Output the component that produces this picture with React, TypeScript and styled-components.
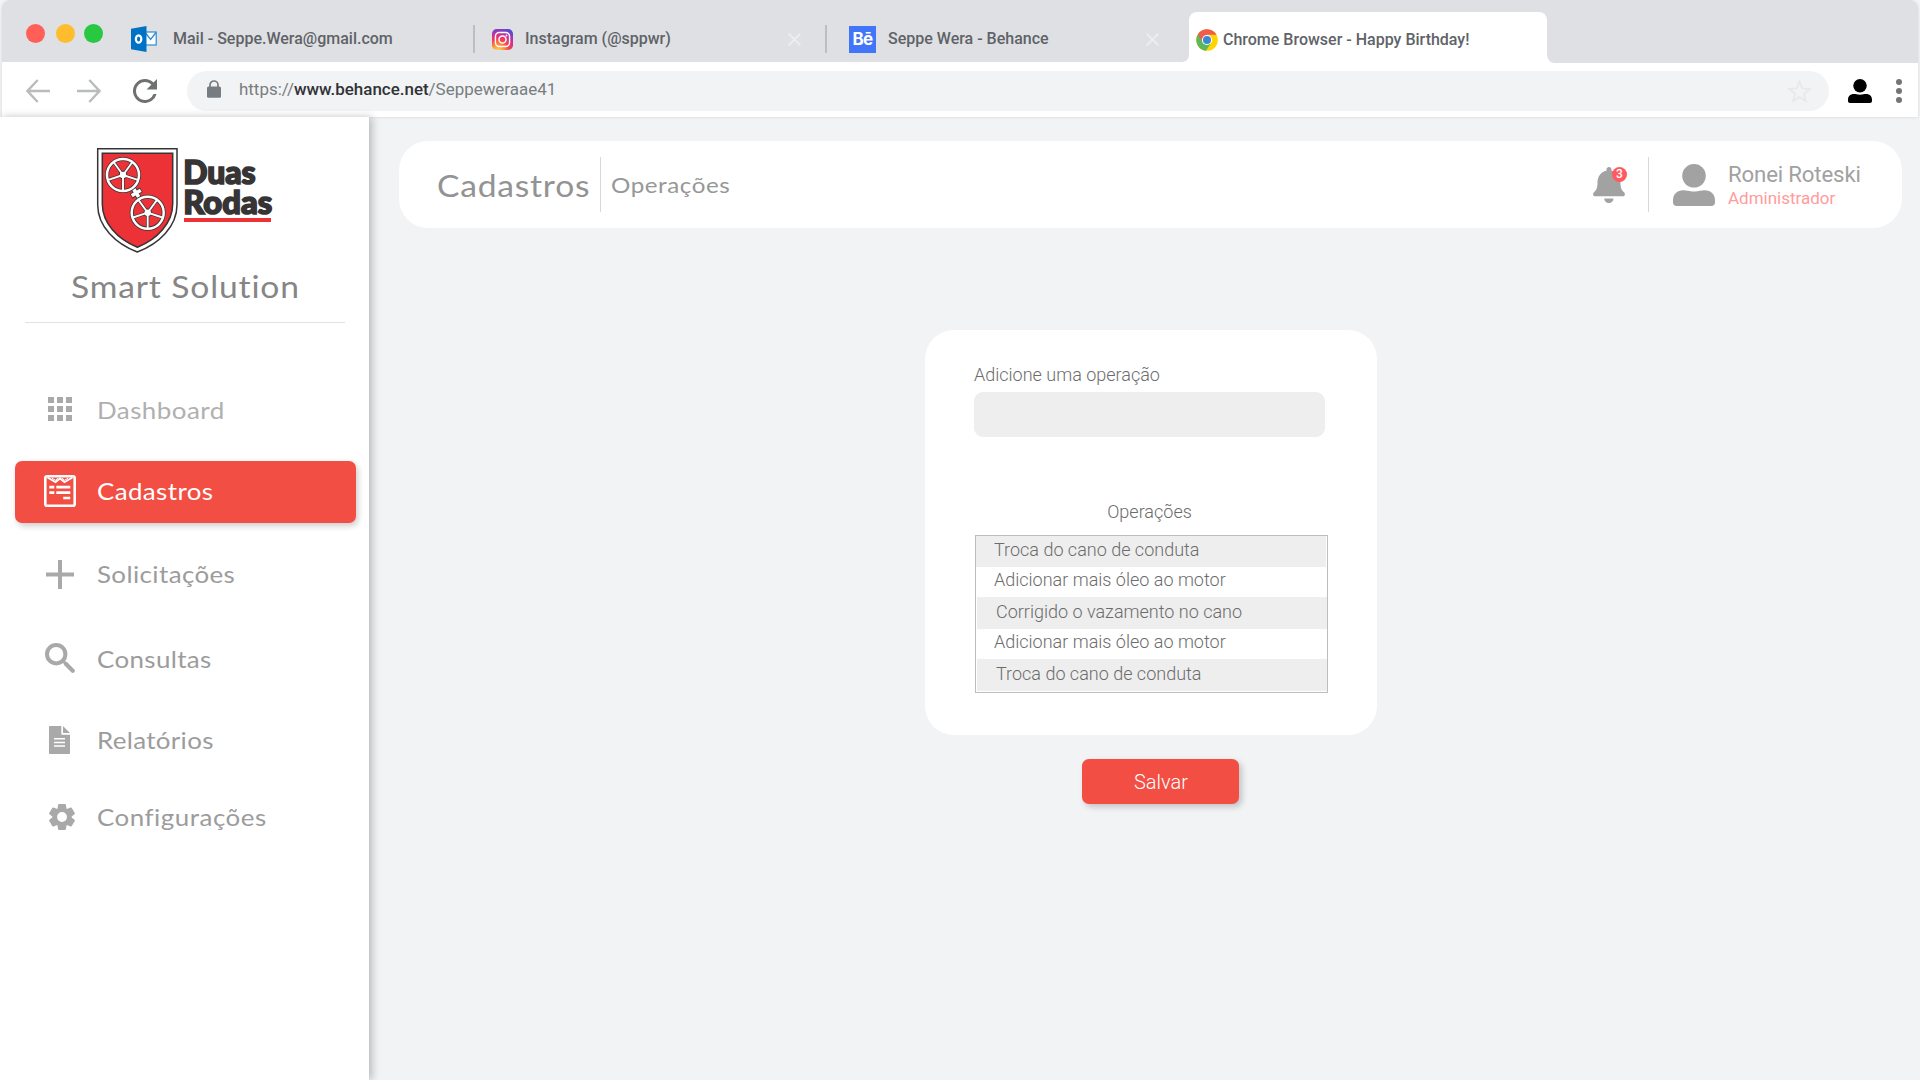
import React from 'react';
import styled, { createGlobalStyle } from 'styled-components';

const GlobalStyle = createGlobalStyle`
  *, *::before, *::after { box-sizing: border-box; }
  body { margin: 0; background: #f1f3f5; font-family: Roboto, "Liberation Sans", sans-serif; overflow: hidden; }
  svg { display: block; flex: none; }
`;

/* ---------- Browser chrome ---------- */

const Screen = styled.div`
  width: 1920px;
  height: 1080px;
  display: flex;
  flex-direction: column;
  background: #f1f3f5;
`;

const Chrome = styled.header`
  margin: 0 2px;
  height: 117px;
  flex: none;
  background: #fff;
  border-radius: 9px 9px 0 0;
  box-shadow: 0 0 3px rgba(0, 0, 0, 0.14);
`;

const TabStrip = styled.div`
  display: flex;
  height: 63px;
  border-radius: 9px 9px 0 0;
  background: linear-gradient(#dee0e4 30px, #fff 30px);
`;

const InactiveTabs = styled.div`
  display: flex;
  align-items: center;
  width: 1187px;
  height: 62px;
  padding: 16px 0 0 24px;
  background: #dee0e4;
  border-radius: 9px 0 7px 0;
`;

const StripRest = styled.div`
  flex: 1;
  background: #dee0e4;
  border-radius: 0 9px 0 8px;
`;

const Lights = styled.div`
  display: flex;
  width: 105px;
  gap: 10px;
  margin-top: -11px;
`;

const Light = styled.span<{ $color: string }>`
  width: 19px;
  height: 19px;
  border-radius: 50%;
  background: ${(p) => p.$color};
  &:nth-child(2) { margin: 0 -1px 0 1px; }
`;

const Tab = styled.div<{ $width: number }>`
  display: flex;
  align-items: center;
  width: ${(p) => p.$width}px;
  height: 28px;
`;

const BorderedTab = styled(Tab)`
  border-left: 2px solid #bcbec1;
  padding-left: ${(p) => (p.$width > 353 ? 22 : 17)}px;
`;

const MailIcon = styled.span`
  margin-top: -1px;
`;

const ActiveTab = styled.div`
  display: flex;
  align-items: center;
  width: 358px;
  margin-top: 12px;
  padding: 4px 0 0 7px;
  height: 51px;
  background: #fff;
  border-radius: 8px 8px 0 0;
`;

const TabTitle = styled.span<{ $gap: number }>`
  margin: 0 0 0 ${(p) => p.$gap}px;
  font-size: 16px;
  font-weight: 500;
  line-height: 20px;
  color: #5f6367;
  white-space: nowrap;
`;

const CloseSlot = styled.span<{ $right: number }>`
  margin-left: auto;
  margin-right: ${(p) => p.$right}px;
`;

const Toolbar = styled.div`
  display: flex;
  align-items: center;
  height: 54px;
  padding: 2px 0 0 24px;
`;

const NavButtons = styled.div`
  display: flex;
  align-items: center;
  width: 161px;
`;

const AddressBar = styled.div`
  display: flex;
  align-items: center;
  width: 1642px;
  height: 40px;
  margin-top: -1px;
  padding: 0 17px 0 20px;
  border-radius: 20px;
  background: #f1f3f4;
`;

const Url = styled.span`
  flex: 1;
  margin: -3px 0 0 18px;
  font-size: 16.95px;
  line-height: 20px;
  color: #787d80;
  b { font-weight: 500; color: #303236; }
`;

/* ---------- Sidebar ---------- */

const Body = styled.div`
  flex: 1;
  display: flex;
`;

const Sidebar = styled.aside`
  position: relative;
  width: 369px;
  flex: none;
  padding-top: 30px;
  background: #fff;
  box-shadow: 3px 0 8px rgba(0, 0, 0, 0.24);
`;

const LogoBox = styled.div`
  height: 119px;
  padding-left: 96px;
`;

const Wide = styled.span<{ $size: number; $stretch: number; $spacing: number; $color: string }>`
  display: block;
  font-family: Lato, "Open Sans", sans-serif;
  font-size: ${(p) => p.$size}px;
  letter-spacing: ${(p) => p.$spacing}px;
  color: ${(p) => p.$color};
  transform: scaleX(${(p) => p.$stretch});
  transform-origin: left center;
  white-space: nowrap;
`;

const Brand = styled.div`
  padding-left: 70.5px;
  height: 40px;
  line-height: 40px;
`;

const Rule = styled.hr`
  height: 1px;
  margin: 16px 24px 55px 25px;
  border: 0;
  background: #e2e2e2;
`;

const NavItem = styled.a<{ $active?: boolean; $gap: number }>`
  display: flex;
  align-items: center;
  height: 62px;
  margin: ${(p) => p.$gap}px 13px 0 15px;
  border-radius: 7px;
  background: ${(p) => (p.$active ? '#f24e43' : 'transparent')};
  box-shadow: ${(p) => (p.$active ? '2px 3px 6px rgba(0, 0, 0, 0.2)' : 'none')};
`;

const NavIcon = styled.span<{ $x: number; $lift: number }>`
  width: 82px;
  padding-left: ${(p) => p.$x - 15}px;
  margin-bottom: ${(p) => p.$lift * 2}px;
`;

const NavLabel = styled.span<{ $lift: number }>`
  line-height: 30px;
  margin-bottom: ${(p) => p.$lift * 2}px;
`;

/* ---------- Main ---------- */

const Main = styled.main`
  flex: 1;
  display: flex;
  flex-direction: column;
  align-items: center;
  padding: 24px 18px 0 30px;
`;

const PageHeader = styled.div`
  display: flex;
  align-items: center;
  width: 100%;
  height: 87px;
  padding-left: 38px;
  border-radius: 29px;
  background: #fff;
`;

const Crumb = styled.div<{ $width: number; $lift: number }>`
  width: ${(p) => p.$width}px;
  margin-bottom: ${(p) => p.$lift * 2}px;
  line-height: 36px;
`;

const VRule = styled.span`
  width: 1px;
  height: 55px;
  background: #d8d8d8;
`;

const BellBox = styled.div`
  position: relative;
  margin: 0 23px 0 auto;
`;

const Badge = styled.span`
  position: absolute;
  top: 0;
  right: -2px;
  width: 15px;
  height: 15px;
  border-radius: 50%;
  background: #ff5a5f;
  color: #fff;
  font-size: 12px;
  font-weight: 500;
  line-height: 15px;
  text-align: center;
`;

const UserIcon = styled.div`
  margin: 0 13px 0 24px;
`;

const UserText = styled.div`
  display: flex;
  flex-direction: column;
  width: 174px;
`;

const UserName = styled.span`
  font-size: 22.2px;
  line-height: 24px;
  color: #a1a1a1;
  letter-spacing: -0.15px;
`;

const UserRole = styled.span`
  font-size: 17px;
  line-height: 20px;
  margin-top: 2px;
  color: #ff9c9c;
`;

const Card = styled.section`
  width: 452px;
  height: 405px;
  margin: 102px 0 0 1px;
  padding: 34px 0 0 49px;
  border-radius: 29px;
  background: #fff;
  font-size: 18px;
  font-weight: 300;
  color: #6c6c6c;
`;

const FieldLabel = styled.label`
  display: block;
  line-height: 22px;
`;

const Field = styled.input`
  display: block;
  width: 351px;
  height: 45px;
  margin-top: 6px;
  padding: 0 14px;
  border: 0;
  border-radius: 9px;
  background: #eee;
`;

const ListTitle = styled.h2`
  width: 351px;
  margin: 64px 0 12px;
  font-size: 18px;
  font-weight: 300;
  line-height: 22px;
  text-align: center;
`;

const List = styled.ul`
  width: 353px;
  height: 158px;
  margin: 0 0 0 1px;
  padding: 0;
  border: 1px solid #bdbdbd;
  list-style: none;
`;

const ListRow = styled.li<{ $height: number; $line: number; $shade: boolean; $inset: boolean }>`
  height: ${(p) => p.$height}px;
  line-height: ${(p) => p.$line}px;
  margin: ${(p) => (p.$inset ? '0 0 0 1px' : '0 1px 0 0')};
  padding-left: ${(p) => (p.$inset ? 19 : 18)}px;
  background: ${(p) => (p.$shade ? '#eee' : 'transparent')};
`;

const SaveButton = styled.button`
  width: 157px;
  height: 45px;
  margin: 24px 0 0 20px;
  padding: 0 0 0 1px;
  border: 0;
  border-radius: 7px;
  background: #f24e43;
  box-shadow: 3px 3px 6px rgba(0, 0, 0, 0.2);
  color: #fff;
  font: 300 20px/46px Roboto, sans-serif;
`;

/* ---------- Drawings ---------- */

const OutlookIcon = () => (
  <svg width="26" height="26" viewBox="0 0 26 26">
    <rect x="13" y="6" width="12.2" height="13" fill="#fff" stroke="#2a8ad4" strokeWidth="1.2" />
    <path d="M15 7.5l4.600 6 5.400-7" fill="none" stroke="#2a8ad4" strokeWidth="1.3" />
    <path d="M0 2.7L15.5 0v26L0 23.3z" fill="#0072c6" />
    <ellipse cx="7.600" cy="13" rx="2.700" ry="3.700" fill="none" stroke="#fff" strokeWidth="2.2" />
  </svg>
);

const InstagramIcon = () => (
  <svg width="21" height="21" viewBox="0 0 22 22">
    <defs>
      <radialGradient id="ig" cx="0.28" cy="1.05" r="1.1">
        <stop offset="0" stopColor="#ffdc5e" />
        <stop offset="0.25" stopColor="#fd9a3c" />
        <stop offset="0.5" stopColor="#f7414c" />
        <stop offset="0.75" stopColor="#c52fa0" />
        <stop offset="1" stopColor="#5a4bd0" />
      </radialGradient>
    </defs>
    <rect width="22" height="22" rx="5" fill="url(#ig)" />
    <rect x="3.6" y="3.6" width="14.8" height="14.8" rx="4.2" fill="none" stroke="#fff" strokeWidth="1.5" />
    <circle cx="11" cy="11" r="3.7" fill="none" stroke="#fff" strokeWidth="1.5" />
    <circle cx="15.2" cy="6.8" r="0.95" fill="#fff" />
  </svg>
);

const BehanceTile = styled.span`
  display: flex;
  align-items: center;
  justify-content: center;
  width: 27px;
  height: 27px;
  background: #4176fb;
  color: #fff;
  font: 700 17px/27px Inter, sans-serif;
  letter-spacing: -0.6px;
`;

const ChromeIcon = () => (
  <svg width="22" height="22" viewBox="0 0 22 22">
    <circle cx="11" cy="11" r="10.8" fill="#ffd400" />
    <path d="M11 11L1.8 5.6A10.8 10.8 0 0 0 10 21.8L15.2 13.5z" fill="#5bb85c" />
    <path d="M11 5.8h9.5A10.8 10.8 0 0 0 1.9 5.3l4.7 8z" fill="#ef5b4c" />
    <circle cx="11" cy="11" r="5.1" fill="#fff" />
    <circle cx="11" cy="11" r="4" fill="#3b87d0" />
  </svg>
);

const CloseIcon = () => (
  <svg width="13" height="13" viewBox="0 0 13 13" stroke="#eceef1" strokeWidth="1.9">
    <path d="M0.7 0.7l11.6 11.6M12.3 0.7L0.7 12.3" />
  </svg>
);

const ArrowIcon = ({ flip }: { flip?: boolean }) => (
  <svg width="24" height="24" viewBox="0 0 24 24" fill="none" stroke="#b9bbbc" strokeWidth="2.4">
    <path d={flip ? 'M0 12h22M12.3 1l10.2 11-10.2 11' : 'M24 12H2M11.7 1L1.5 12l10.2 11'} />
  </svg>
);

const ReloadIcon = () => (
  <svg width="24" height="24" viewBox="4 4 16 16" fill="#6f7072">
    <path d="M17.65 6.35A7.96 7.96 0 0 0 12 4a8 8 0 1 0 7.73 10h-2.08A6 6 0 1 1 12 6c1.66 0 3.14.69 4.22 1.78L13 11h7V4z" />
  </svg>
);

const LockIcon = () => (
  <svg width="14" height="18" viewBox="0 0 14 18">
    <path d="M3 8V5a4 4 0 0 1 8 0v3" fill="none" stroke="#767c80" strokeWidth="1.7" />
    <rect y="6.600" width="14" height="11.2" rx="1.5" fill="#767c80" />
  </svg>
);

const LockSlot = styled.span`
  margin-top: -3px;
`;

const StarIcon = () => (
  <svg width="25" height="24" viewBox="2 2 20 19" fill="#e7e9eb">
    <path d="M22 9.24l-7.19-.62L12 2 9.19 8.63 2 9.24l5.46 4.73L5.82 21 12 17.27 18.18 21l-1.63-7.03zM12 15.4l-3.76 2.27 1-4.28-3.32-2.88 4.38-.38L12 6.1l1.71 4.04 4.38.38-3.32 2.88 1 4.28z" />
  </svg>
);

const PersonIcon = ({ size, color }: { size: number; color: string }) => (
  <svg width={size} height={size} viewBox="0 0 42 42" fill={color}>
    <circle cx="21" cy="11.8" r="11.8" />
    <path d="M0 38.5V36C0 30 4.5 26.2 10 26.2c4 0 6 1.2 11 1.2s7-1.2 11-1.2c5.5 0 10 3.8 10 9.8v2.5c0 2-1.5 3.5-3.5 3.5h-35C1.5 42 0 40.5 0 38.5z" />
  </svg>
);

const KebabIcon = () => (
  <svg width="6" height="24" viewBox="0 0 6 24" fill="#757575">
    <circle cx="3" cy="3" r="3" />
    <circle cx="3" cy="12" r="3" />
    <circle cx="3" cy="21" r="3" />
  </svg>
);

const BellIcon = () => (
  <svg width="32" height="36" viewBox="0 0 32 36" fill="#a2a2a2">
    <path d="M16 0c1.5 0 2.5 1.1 2.5 2.6v1.2C24.5 5 27.5 10 27.5 15c0 5 .5 7.5 3.5 10.3 1 1 1 2 .8 2.7-.2.9-.9 1.3-1.8 1.3H2c-.9 0-1.6-.4-1.8-1.3-.2-.7-.2-1.7.8-2.7 3-2.8 3.5-5.3 3.5-10.3 0-5 3-10 9-11.2V2.6C13.500 1.100 14.500 0 16 0z" />
    <path d="M11.2 31.5h9.3c0 2.7-2 4.5-4.6 4.5s-4.7-1.8-4.7-4.5z" />
  </svg>
);

const SPOKES = [90, 162, 234, 306, 18];

const Wheel = ({ cx, cy }: { cx: number; cy: number }) => (
  <g transform={`translate(${cx} ${cy})`}>
    <circle r="16" fill="none" stroke="#373435" strokeWidth="4" />
    {SPOKES.map((a) => (
      <line key={a} x2="15" transform={`rotate(${a})`} stroke="#373435" strokeWidth="3.2" />
    ))}
    <circle r="4.3" fill="#373435" />
    <circle r="16" fill="none" stroke="#fff" strokeWidth="2.5" />
    {SPOKES.map((a) => (
      <line key={a} x2="15.5" transform={`rotate(${a})`} stroke="#fff" strokeWidth="1.9" />
    ))}
    <circle r="3.2" fill="#fff" />
  </g>
);

const WORDMARK = { fontFamily: 'Lato, sans-serif', fontWeight: 900, fontSize: 33, fill: '#373435', stroke: '#373435', strokeWidth: 1.7 };

const Logo = () => (
  <svg width="180" height="108" viewBox="96 147 180 108">
    <path d="M97.7 148.7H177v56c0 22-18 39-39.7 47.3C115.7 243.700 97.7 226.7 97.7 204.7z" fill="#fff" stroke="#373435" strokeWidth="1.5" />
    <path d="M102.3 153.2h70.4v50.5c0 19.5-15.5 35.5-35.3 43.6-19.8-8.1-35.1-24.1-35.1-43.6z" fill="#ec3237" stroke="#373435" strokeWidth="1.5" />
    <g transform="translate(136.2 193) rotate(-32)">
      <path d="M-6 0H6M0-5.5V5.5" stroke="#373435" strokeWidth="5.2" />
      <path d="M-5.3 0H5.3M0-4.8V4.8" stroke="#fff" strokeWidth="3.6" />
    </g>
    <Wheel cx={123} cy={175} />
    <Wheel cx={147.7} cy={212.7} />
    <text x="183.2" y="183.5" textLength="72.5" lengthAdjust="spacingAndGlyphs" {...WORDMARK}>Duas</text>
    <text x="183.2" y="214" textLength="89" lengthAdjust="spacingAndGlyphs" {...WORDMARK}>Rodas</text>
    <rect x="184" y="218" width="87" height="4" fill="#ec3237" />
  </svg>
);

const GridIcon = () => (
  <svg width="24" height="24" fill="#a9a9a9">
    {[0, 9, 18].map((y) => [0, 9, 18].map((x) => <rect key={`${x}-${y}`} x={x} y={y} width="6" height="6" />))}
  </svg>
);

const FormIcon = () => (
  <svg width="32" height="32" viewBox="0 0 32 32" fill="none" stroke="#fff">
    <rect x="1.3" y="1.3" width="29.4" height="29.4" rx="1.8" strokeWidth="2.6" />
    <path d="M3.5 2.5l8 4.6 4.5-3.6 4.5 3.6 8-4.6" strokeWidth="1.9" />
    <path d="M8 3.2l3.5 2 2.5-2M18 3.2l2.500 2 3.500-2" strokeWidth="1" />
    <path d="M5.3 12.1h5M12.3 12.1h14M5.3 17.6h5M12.3 17.6h14M19.2 23h7" strokeWidth="2.6" />
  </svg>
);

const PlusIcon = () => (
  <svg width="28" height="29" fill="#a9a9a9">
    <rect x="12" width="4" height="29" />
    <rect y="12.5" width="28" height="4" />
  </svg>
);

const SearchIcon = () => (
  <svg width="30" height="30" viewBox="0 0 30 30" fill="none" stroke="#a9a9a9">
    <circle cx="11.2" cy="11.2" r="9.2" strokeWidth="4" />
    <path d="M18 18l3 3" strokeWidth="2.6" />
    <path d="M21 21l6.7 6.7" strokeWidth="4.2" strokeLinecap="round" />
  </svg>
);

const DocIcon = () => (
  <svg width="21" height="28" viewBox="0 0 21 28">
    <path d="M1 0h11.300v7.700c0 .6.3 1 1 1H21V27c0 .6-.4 1-1 1H1c-.6 0-1-.4-1-1V1c0-.6.4-1 1-1z" fill="#a9a9a9" />
    <path d="M14 0l7 7h-7z" fill="#a9a9a9" />
    <path d="M5 12.7h11M5 16.4h11M5 20.1h11" stroke="#fff" strokeWidth="1.5" />
  </svg>
);

const GearIcon = () => (
  <svg width="26" height="26" viewBox="-13 -13 26 26">
    <g fill="#a9a9a9">
      <circle r="9.6" />
      {[0, 60, 120].map((a) => (
        <path key={a} transform={`rotate(${a})`} d="M-3.9 -12.2q.1-.8.9-.8h6q.8 0 .9.8l.6 4v16.4l-.6 4q-.1.8-.9.8h-6q-.8 0-.9-.8l-.6-4v-16.4z" />
      ))}
    </g>
    <circle r="4.9" fill="#fff" />
  </svg>
);

/* ---------- Data ---------- */

const NAV = [
  { label: 'Dashboard', icon: <GridIcon />, x: 48, gap: 0, lift: -0.5, iconLift: 0, spacing: 0.43, color: '#b0b0b0' },
  { label: 'Cadastros', icon: <FormIcon />, x: 44, gap: 21, lift: 1.5, iconLift: 1, spacing: 0.35, color: '#fff', active: true },
  { label: 'Solicitações', icon: <PlusIcon />, x: 46, gap: 21, lift: 1.5, iconLift: 0.5, spacing: 0.36, color: '#9c9c9c' },
  { label: 'Consultas', icon: <SearchIcon />, x: 45, gap: 21, lift: -0.5, iconLift: 0, spacing: 0.34, color: '#9c9c9c' },
  { label: 'Relatórios', icon: <DocIcon />, x: 49, gap: 20, lift: 0.5, iconLift: 0, spacing: 0.31, color: '#9c9c9c' },
  { label: 'Configurações', icon: <GearIcon />, x: 49, gap: 15, lift: 0.5, iconLift: 0, spacing: 0.47, color: '#9c9c9c' },
];

const OPERATIONS = [
  { text: 'Troca do cano de conduta', height: 31, line: 28, shade: true, inset: false },
  { text: 'Adicionar mais óleo ao motor', height: 30, line: 26, shade: false, inset: false },
  { text: 'Corrigido o vazamento no cano', height: 32, line: 30, shade: true, inset: true },
  { text: 'Adicionar mais óleo ao motor', height: 30, line: 26, shade: false, inset: false },
  { text: 'Troca do cano de conduta', height: 32, line: 30, shade: true, inset: true },
];

const KebabSlot = styled.span`
  margin-left: 24px;
`;

const ProfileSlot = styled.span`
  margin-left: 19px;
`;

const Gap = styled.span<{ $w: number }>`
  width: ${(p) => p.$w}px;
`;

export default function App() {
  return (
    <Screen>
      <GlobalStyle />
      <Chrome>
        <TabStrip>
          <InactiveTabs>
            <Lights>
              <Light $color="#ff5f57" />
              <Light $color="#ffbd2e" />
              <Light $color="#28c840" />
            </Lights>
            <Tab $width={342}>
              <MailIcon><OutlookIcon /></MailIcon>
              <TabTitle $gap={16}>Mail - Seppe.Wera@gmail.com</TabTitle>
            </Tab>
            <BorderedTab $width={352}>
              <InstagramIcon />
              <TabTitle $gap={12}>Instagram (@sppwr)</TabTitle>
              <CloseSlot $right={24}><CloseIcon /></CloseSlot>
            </BorderedTab>
            <BorderedTab $width={362}>
              <BehanceTile>Bē</BehanceTile>
              <TabTitle $gap={12}>Seppe Wera - Behance</TabTitle>
              <CloseSlot $right={28}><CloseIcon /></CloseSlot>
            </BorderedTab>
          </InactiveTabs>
          <ActiveTab>
            <ChromeIcon />
            <TabTitle $gap={5}>Chrome Browser - Happy Birthday!</TabTitle>
          </ActiveTab>
          <StripRest />
        </TabStrip>
        <Toolbar>
          <NavButtons>
            <ArrowIcon />
            <Gap $w={27} />
            <ArrowIcon flip />
            <Gap $w={32} />
            <ReloadIcon />
          </NavButtons>
          <AddressBar>
            <LockSlot><LockIcon /></LockSlot>
            <Url>https://<b>www.behance.net</b>/Seppeweraae41</Url>
            <StarIcon />
          </AddressBar>
          <ProfileSlot><PersonIcon size={24} color="#000" /></ProfileSlot>
          <KebabSlot><KebabIcon /></KebabSlot>
        </Toolbar>
      </Chrome>
      <Body>
        <Sidebar>
          <LogoBox><Logo /></LogoBox>
          <Brand>
            <Wide $size={30} $stretch={1.12} $spacing={0.77} $color="#868686">Smart Solution</Wide>
          </Brand>
          <Rule />
          <nav>
            {NAV.map((n) => (
              <NavItem key={n.label} $active={n.active} $gap={n.gap}>
                <NavIcon $x={n.x} $lift={n.iconLift}>{n.icon}</NavIcon>
                <NavLabel $lift={n.lift}>
                  <Wide $size={24} $stretch={1.08} $spacing={n.spacing} $color={n.color}>{n.label}</Wide>
                </NavLabel>
              </NavItem>
            ))}
          </nav>
        </Sidebar>
        <Main>
          <PageHeader>
            <Crumb $width={163} $lift={0}>
              <Wide $size={30} $stretch={1.12} $spacing={0.68} $color="#939393">Cadastros</Wide>
            </Crumb>
            <VRule />
            <Gap $w={10} />
            <Crumb $width={140} $lift={0}>
              <Wide $size={22} $stretch={1.1} $spacing={0.5} $color="#979797">Operações</Wide>
            </Crumb>
            <BellBox>
              <BellIcon />
              <Badge>3</Badge>
            </BellBox>
            <VRule />
            <UserIcon><PersonIcon size={42} color="#a2a2a2" /></UserIcon>
            <UserText>
              <UserName>Ronei Roteski</UserName>
              <UserRole>Administrador</UserRole>
            </UserText>
          </PageHeader>
          <Card>
            <FieldLabel htmlFor="operation">Adicione uma operação</FieldLabel>
            <Field id="operation" />
            <ListTitle>Operações</ListTitle>
            <List>
              {OPERATIONS.map((o, i) => (
                <ListRow key={i} $height={o.height} $line={o.line} $shade={o.shade} $inset={o.inset}>{o.text}</ListRow>
              ))}
            </List>
          </Card>
          <SaveButton>Salvar</SaveButton>
        </Main>
      </Body>
    </Screen>
  );
}
